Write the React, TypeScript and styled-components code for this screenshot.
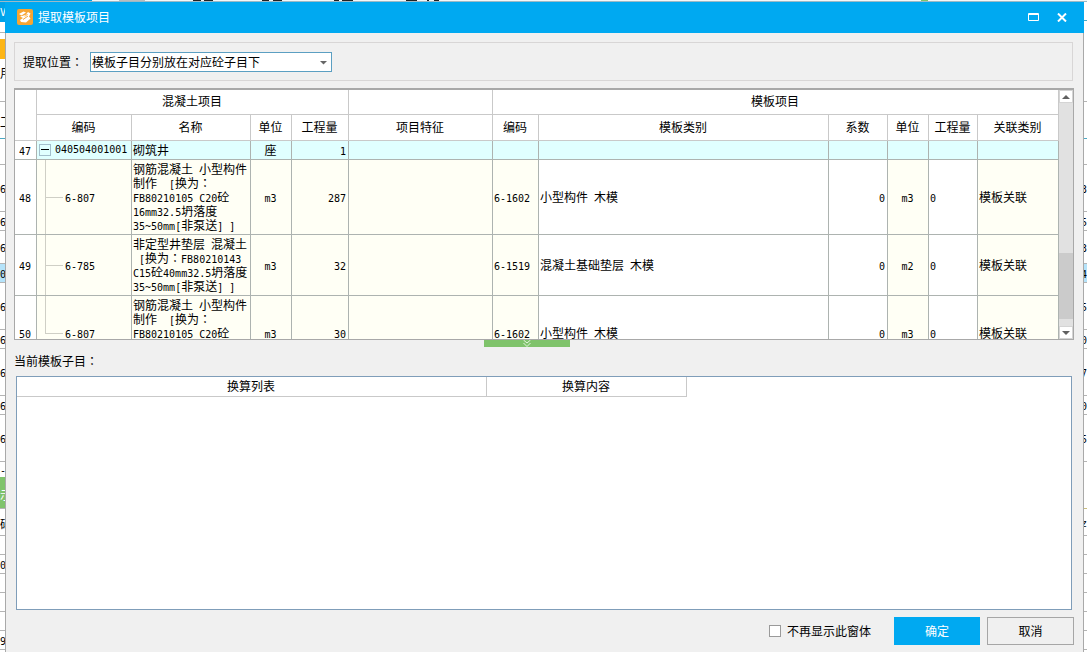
import React from "react";
import styled, { createGlobalStyle, css } from "styled-components";

const GlobalStyle = createGlobalStyle`
  *, *::before, *::after { box-sizing: border-box; }
  body {
    margin: 0;
    background: #fff;
    color: #000;
    font: 12px/14px "Noto Sans CJK SC", "Noto Sans", sans-serif;
  }
  button, select, input { font: inherit; color: inherit; margin: 0; padding: 0; }
`;

const Desktop = styled.div`
  display: flex;
  flex-direction: column;
  height: 100vh;
  min-height: 520px;
  overflow: hidden;
`;

const TopEdge = styled.div`
  display: flex;
  height: 2px;
  flex: none;
  border-bottom: 1px solid #9cb9c6;
  background: #f4f6f7;
`;

const EdgeMark = styled.i<{ $w: number; $gap?: number; $color?: string }>`
  width: ${(p) => p.$w}px;
  height: 1px;
  margin-left: ${(p) => p.$gap ?? 0}px;
  background: ${(p) => p.$color ?? "#222"};
`;

const Columns = styled.div`
  display: flex;
  flex: 1;
  min-height: 0;
`;

const Edge = styled.div<{ $width: number }>`
  width: ${(p) => p.$width}px;
  flex: none;
  overflow: hidden;
  background: #fff;
`;

const EdgeRow = styled.div<{ $h: number; $bg?: string; $line?: string; $color?: string; $end?: boolean }>`
  display: flex;
  align-items: center;
  justify-content: ${(p) => (p.$end ? "flex-end" : "flex-start")};
  height: ${(p) => p.$h}px;
  padding-top: 3px;
  background: ${(p) => p.$bg ?? "#fff"};
  border-bottom: 1px solid ${(p) => p.$line ?? "#b4b4b4"};
  color: ${(p) => p.$color ?? "#000"};
  white-space: nowrap;
`;

const Dialog = styled.section`
  display: flex;
  flex: 1;
  min-width: 0;
  flex-direction: column;
  background: #f0f0f0;
  border: solid #a9a9a9;
  border-width: 0 1px;
`;

const TitleBar = styled.header`
  display: flex;
  align-items: center;
  height: 31px;
  flex: none;
  margin: 0 -1px;
  padding: 0 10px 1px 12px;
  gap: 5px;
  background: #00a9f1;
  color: #fff;
`;

const Title = styled.h1`
  flex: 1;
  margin: 0;
  font-size: 12px;
  font-weight: 400;
`;

const WindowButton = styled.button`
  display: grid;
  place-items: center;
  width: 24px;
  height: 24px;
  border: 0;
  background: none;
`;

const Content = styled.div`
  display: flex;
  flex: 1;
  min-height: 0;
  flex-direction: column;
  padding: 9px 9px 7px 8px;
`;

const OptionBar = styled.div`
  display: flex;
  align-items: center;
  height: 39px;
  flex: none;
  margin-right: 1px;
  padding-left: 8px;
  gap: 7px;
  border: 1px solid #d8d6d6;
`;

const SelectBox = styled.div`
  position: relative;
  width: 242px;
  svg { position: absolute; right: 5px; top: 9px; pointer-events: none; }
`;

const Select = styled.select`
  display: block;
  width: 100%;
  height: 20px;
  padding: 0 20px 0 1px;
  border: 1px solid #5b9fc2;
  border-radius: 0;
  background: #fff;
  appearance: none;
`;

const GridFrame = styled.div`
  display: flex;
  height: 252px;
  flex: none;
  margin-top: 7px;
  border: 1px solid #a8a8a8;
  border-top-width: 2px;
  background: #fff;
`;

const GridView = styled.div`
  flex: 1;
  min-width: 0;
  overflow: hidden;
`;

const DataTable = styled.table`
  width: 100%;
  table-layout: fixed;
  border-collapse: separate;
  border-spacing: 0;
`;

const HeadCell = styled.th<{ $h: number }>`
  height: ${(p) => p.$h}px;
  padding: 0 1px 2px 0;
  border: solid #c9c9c9;
  border-width: 0 1px 1px 0;
  background: #fff;
  font-weight: 400;
`;

type Tone = "plain" | "cream" | "cyan";
const tones: Record<Tone, string> = { plain: "#fff", cream: "#fffff5", cyan: "#e0ffff" };

const Cell = styled.td<{ $tone?: Tone; $align?: string }>`
  padding: 2px 2px 2px 1px;
  border: solid #adb3b0;
  border-width: 0 1px 1px 0;
  background: ${(p) => tones[p.$tone ?? "plain"]};
  text-align: ${(p) => p.$align ?? "left"};
  white-space: pre;
`;

const Latin = styled.span`
  font-family: "DejaVu Sans Mono", monospace;
  font-size: 10px;
  line-height: 10px;
`;

/* Full-width colon that sits in the middle of its square. */
const Colon = styled.span`
  font-family: "Noto Sans CJK TC", sans-serif;
`;

const Line = styled.div`
  height: 14px;
`;

const branch = css`
  content: "";
  position: absolute;
  left: 8px;
  background: #cfcfc6;
`;

const ChildCode = styled(Cell)<{ $last?: boolean }>`
  position: relative;
  padding-left: 28px;
  &::before { ${branch} top: 0; width: 1px; height: ${(p) => (p.$last ? "50%" : "100%")}; }
  &::after { ${branch} top: 50%; width: 18px; height: 1px; }
`;

const CodeWithToggle = styled.div`
  display: flex;
  align-items: center;
  height: 14px;
  padding-left: 1px;
  gap: 4px;
`;

const Toggle = styled.button`
  display: grid;
  place-items: center;
  width: 12px;
  height: 12px;
  border: 1px solid #a3bfcc;
  background: #e0ffff;
`;

const ScrollBar = styled.div`
  display: flex;
  flex-direction: column;
  width: 14px;
  flex: none;
  background: #e1e1e1;
`;

const ScrollButton = styled.button`
  display: grid;
  place-items: center;
  height: 13px;
  border: 1px solid #d4d4d4;
  background: #fff;
`;

const Track = styled.div`
  display: flex;
  flex: 1;
  flex-direction: column;
  justify-content: flex-end;
  padding-bottom: 7px;
`;

const Thumb = styled.div`
  height: 66px;
  background: #cbcbcb;
`;

const Splitter = styled.div`
  display: grid;
  grid-template-columns: 470fr 86px 503fr;
  height: 7px;
  flex: none;
`;

const SplitGrip = styled.button`
  grid-column: 2;
  display: grid;
  place-items: center;
  border: 0;
  background: #7fc36b;
`;

const SectionLabel = styled.h2`
  margin: 7px 0 8px;
  font-size: 12px;
  font-weight: 400;
`;

const DetailPanel = styled.div`
  flex: 1;
  min-height: 0;
  margin: 0 2px;
  border: 1px solid #7f9db9;
  background: #fff;
`;

const DetailTable = styled(DataTable)`
  width: 670px;
`;

const Footer = styled.footer`
  display: flex;
  align-items: center;
  justify-content: flex-end;
  flex: none;
  margin-top: 7px;
  gap: 7px;
`;

const CheckLabel = styled.label`
  display: flex;
  align-items: center;
  gap: 6px;
  margin-right: 16px;
`;

const CheckBox = styled.input`
  width: 12px;
  height: 12px;
  border: 1px solid #9a9a9a;
  background: #fff;
  appearance: none;
  &:checked { background: #00a9f1; }
`;

const Action = styled.button<{ $primary?: boolean }>`
  width: ${(p) => (p.$primary ? 86 : 87)}px;
  height: 28px;
  border: 1px solid ${(p) => (p.$primary ? "#00a9f1" : "#a6a6a6")};
  background: ${(p) => (p.$primary ? "#00a9f1" : "#f0f0f0")};
  color: ${(p) => (p.$primary ? "#fff" : "#000")};
`;

/* Sets letters and digits in the half-width face and centres the colons. */
function Mixed({ text }: { text: string }) {
  return (
    <>
      {text.split(/([\x20-\x7e]+|：)/).map((part, i) => {
        if (part === "：") return <Colon key={i}>{part}</Colon>;
        return i % 2 ? <Latin key={i}>{part}</Latin> : part;
      })}
    </>
  );
}

type EdgeItem = { h: number; text?: string; bg?: string; line?: string; color?: string };

const middle = (t: string[]): EdgeItem[] => [
  { h: 26 },
  { h: 47, text: t[0] },
  { h: 19, text: t[1] },
  { h: 33, text: t[2] },
  { h: 19, text: t[3], bg: "#b5e3fa" },
  { h: 47, text: t[4] },
  { h: 19, text: t[5] },
  { h: 47, text: t[6] },
  { h: 19, text: t[7] },
  { h: 47, text: t[8] },
];

const leftItems: EdgeItem[] = [
  { h: 20, text: "V", bg: "#00a2e8", color: "#fff", line: "#00a2e8" },
  { h: 11 },
  { h: 6, line: "#fff" },
  { h: 21, bg: "#fdb515", line: "#fff" },
  { h: 24, text: "用", line: "#fff" },
  { h: 18 },
  { h: 37, text: "工", line: "#4ba9c4" },
  ...middle(["6", "6", "6", "0", "6", "6", "6", "6", "6"]),
  { h: 16, text: "-", line: "#7fc36b" },
  { h: 31, text: "示", bg: "#7fc36b", color: "#fff" },
  { h: 27, text: "码" },
  { h: 19 },
  { h: 19, text: "0" },
  { h: 19 },
  { h: 19 },
  { h: 19 },
  { h: 19, text: "9" },
];

const rightItems: EdgeItem[] = [
  { h: 19, line: "#4ba9c4" },
  { h: 81 },
  { h: 37, line: "#4ba9c4" },
  ...middle(["3", "5", "3", "4", "5", "0", "7", "0", "5"]),
  { h: 47, line: "#c9bd7d" },
  { h: 27, text: "z" },
  { h: 19 },
  { h: 19 },
  { h: 19 },
  { h: 19 },
  { h: 19 },
  { h: 19 },
];

function EdgeStrip({ items, width, end }: { items: EdgeItem[]; width: number; end?: boolean }) {
  return (
    <Edge $width={width} aria-hidden="true">
      {items.map((r, i) => (
        <EdgeRow key={i} $h={r.h} $bg={r.bg} $line={r.line} $color={r.color} $end={end}>
          {r.text && <Mixed text={r.text} />}
        </EdgeRow>
      ))}
    </Edge>
  );
}

const colWidths = [22, 95, 119, 41, 57, 144, 46, 0, 59, 41, 49, 81];

const columns = ["编码", "名称", "单位", "工程量", "项目特征", "编码", "模板类别", "系数", "单位", "工程量", "关联类别"];

const smallPart = ["钢筋混凝土 小型构件", "制作　[换为：", "FB80210105 C20砼", "16mm32.5坍落度", "35~50mm[非泵送] ]"];

const rows = [
  { no: 48, code: "6-807", name: smallPart, qty: "287", form: "6-1602", kind: "小型构件 木模", unit: "m3" },
  {
    no: 49,
    code: "6-785",
    name: ["非定型井垫层 混凝土", " [换为：FB80210143", "C15砼40mm32.5坍落度", "35~50mm[非泵送] ]"],
    qty: "32",
    form: "6-1519",
    kind: "混凝土基础垫层 木模",
    unit: "m2",
  },
  { no: 50, code: "6-807", name: smallPart, qty: "30", form: "6-1602", kind: "小型构件 木模", unit: "m3" },
];

function ItemTable() {
  return (
    <DataTable>
      <colgroup>
        {colWidths.map((w, i) => (
          <col key={i} width={w || undefined} />
        ))}
      </colgroup>
      <thead>
        <tr>
          <HeadCell $h={51} rowSpan={2} />
          <HeadCell $h={25} colSpan={4}>混凝土项目</HeadCell>
          <HeadCell $h={25} />
          <HeadCell $h={25} colSpan={6}>模板项目</HeadCell>
        </tr>
        <tr>
          {columns.map((c, i) => (
            <HeadCell key={i} $h={26}>{c}</HeadCell>
          ))}
        </tr>
      </thead>
      <tbody>
        <tr>
          <Cell $align="center"><Latin>47</Latin></Cell>
          <Cell $tone="cyan">
            <CodeWithToggle>
              <Toggle aria-label="折叠">
                <svg width="8" height="8" viewBox="0 0 8 8"><path d="M0 3.5h8" stroke="#000" /></svg>
              </Toggle>
              <Latin>040504001001</Latin>
            </CodeWithToggle>
          </Cell>
          <Cell $tone="cyan">砌筑井</Cell>
          <Cell $tone="cyan" $align="center">座</Cell>
          <Cell $tone="cyan" $align="right"><Latin>1</Latin></Cell>
          {columns.slice(4).map((_, i) => (
            <Cell key={i} $tone="cyan" />
          ))}
        </tr>
        {rows.map((r) => (
          <tr key={r.no}>
            <Cell $align="center"><Latin>{r.no}</Latin></Cell>
            <ChildCode $tone="cream" $last={r.no === 50}><Latin>{r.code}</Latin></ChildCode>
            <Cell $tone="cream">
              {r.name.map((l) => (
                <Line key={l}><Mixed text={l} /></Line>
              ))}
            </Cell>
            <Cell $tone="cream" $align="center"><Latin>m3</Latin></Cell>
            <Cell $tone="cream" $align="right"><Latin>{r.qty}</Latin></Cell>
            <Cell $tone="cream" />
            <Cell $tone="cream"><Latin>{r.form}</Latin></Cell>
            <Cell><Mixed text={r.kind} /></Cell>
            <Cell $align="right"><Latin>0</Latin></Cell>
            <Cell $tone="cream" $align="center"><Latin>{r.unit}</Latin></Cell>
            <Cell><Latin>0</Latin></Cell>
            <Cell $tone="cream">模板关联</Cell>
          </tr>
        ))}
      </tbody>
    </DataTable>
  );
}

export default function App() {
  return (
    <Desktop>
      <GlobalStyle />
      <TopEdge aria-hidden="true">
        <EdgeMark $w={92} $color="#00a2e8" />
        <EdgeMark $gap={27} $w={26} $color="#b9bcbe" />
        <EdgeMark $gap={48} $w={8} />
        <EdgeMark $gap={3} $w={9} />
        <EdgeMark $gap={49} $w={7} />
        <EdgeMark $gap={4} $w={9} />
        <EdgeMark $gap={52} $w={5} />
        <EdgeMark $gap={3} $w={11} />
        <EdgeMark $gap={53} $w={11} />
        <EdgeMark $gap={10} $w={2} />
        <EdgeMark $gap={5} $w={5} />
        <EdgeMark $gap={482} $w={7} $color="#7fc36b" />
      </TopEdge>
      <Columns>
        <EdgeStrip items={leftItems} width={5} />
        <Dialog role="dialog" aria-label="提取模板项目">
          <TitleBar>
            <svg width="16" height="16" viewBox="0 0 16 16">
              <rect width="16" height="16" rx="2" fill="#f6a532" />
              <path d="M2 5 6.500 2.500 9 3.500 4.500 6.500z" fill="#fff" />
              <path d="M3 7.500 8.500 6 11 3l2.500 1.500L12 7.500l1.500 2L9 13.500 4 13l-1-2 3-2z" fill="#fff" />
              <path d="M6 10.500 11 7M8 7.500l2.500-2.500" stroke="#f6a532" />
            </svg>
            <Title>提取模板项目</Title>
            <WindowButton aria-label="最大化">
              <svg width="11" height="8" viewBox="0 0 11 8">
                <path d="M.5.5h10v7H.5zM0 1.500h11" fill="none" stroke="#fff" />
              </svg>
            </WindowButton>
            <WindowButton aria-label="关闭">
              <svg width="10" height="9" viewBox="0 0 10 9">
                <path d="M1 .5l8 8M9 .5l-8 8" stroke="#fff" strokeWidth="2" />
              </svg>
            </WindowButton>
          </TitleBar>
          <Content>
            <OptionBar>
              <label htmlFor="position"><Mixed text="提取位置：" /></label>
              <SelectBox>
                <Select id="position">
                  <option>模板子目分别放在对应砼子目下</option>
                </Select>
                <svg width="7" height="4" viewBox="0 0 7 4"><path d="M0 0h7L3.500 3.500z" fill="#666" /></svg>
              </SelectBox>
            </OptionBar>
            <GridFrame>
              <GridView><ItemTable /></GridView>
              <ScrollBar>
                <ScrollButton aria-label="向上滚动">
                  <svg width="8" height="4" viewBox="0 0 8 4"><path d="M0 4h8L4 0z" fill="#606060" /></svg>
                </ScrollButton>
                <Track><Thumb /></Track>
                <ScrollButton aria-label="向下滚动">
                  <svg width="8" height="4" viewBox="0 0 8 4"><path d="M0 0h8L4 4z" fill="#606060" /></svg>
                </ScrollButton>
              </ScrollBar>
            </GridFrame>
            <Splitter>
              <SplitGrip aria-label="折叠面板">
                <svg width="8" height="7" viewBox="0 0 8 7">
                  <path d="M.5 0 4 3 7.500 0M.5 3 4 6.500 7.500 3" fill="none" stroke="#e4f5de" />
                </svg>
              </SplitGrip>
            </Splitter>
            <SectionLabel><Mixed text="当前模板子目：" /></SectionLabel>
            <DetailPanel>
              <DetailTable>
                <colgroup>
                  <col width={470} />
                  <col width={200} />
                </colgroup>
                <thead>
                  <tr>
                    <HeadCell $h={20}>换算列表</HeadCell>
                    <HeadCell $h={20}>换算内容</HeadCell>
                  </tr>
                </thead>
              </DetailTable>
            </DetailPanel>
            <Footer>
              <CheckLabel>
                <CheckBox type="checkbox" />
                不再显示此窗体
              </CheckLabel>
              <Action $primary>确定</Action>
              <Action>取消</Action>
            </Footer>
          </Content>
        </Dialog>
        <EdgeStrip items={rightItems} width={3} end />
      </Columns>
    </Desktop>
  );
}
